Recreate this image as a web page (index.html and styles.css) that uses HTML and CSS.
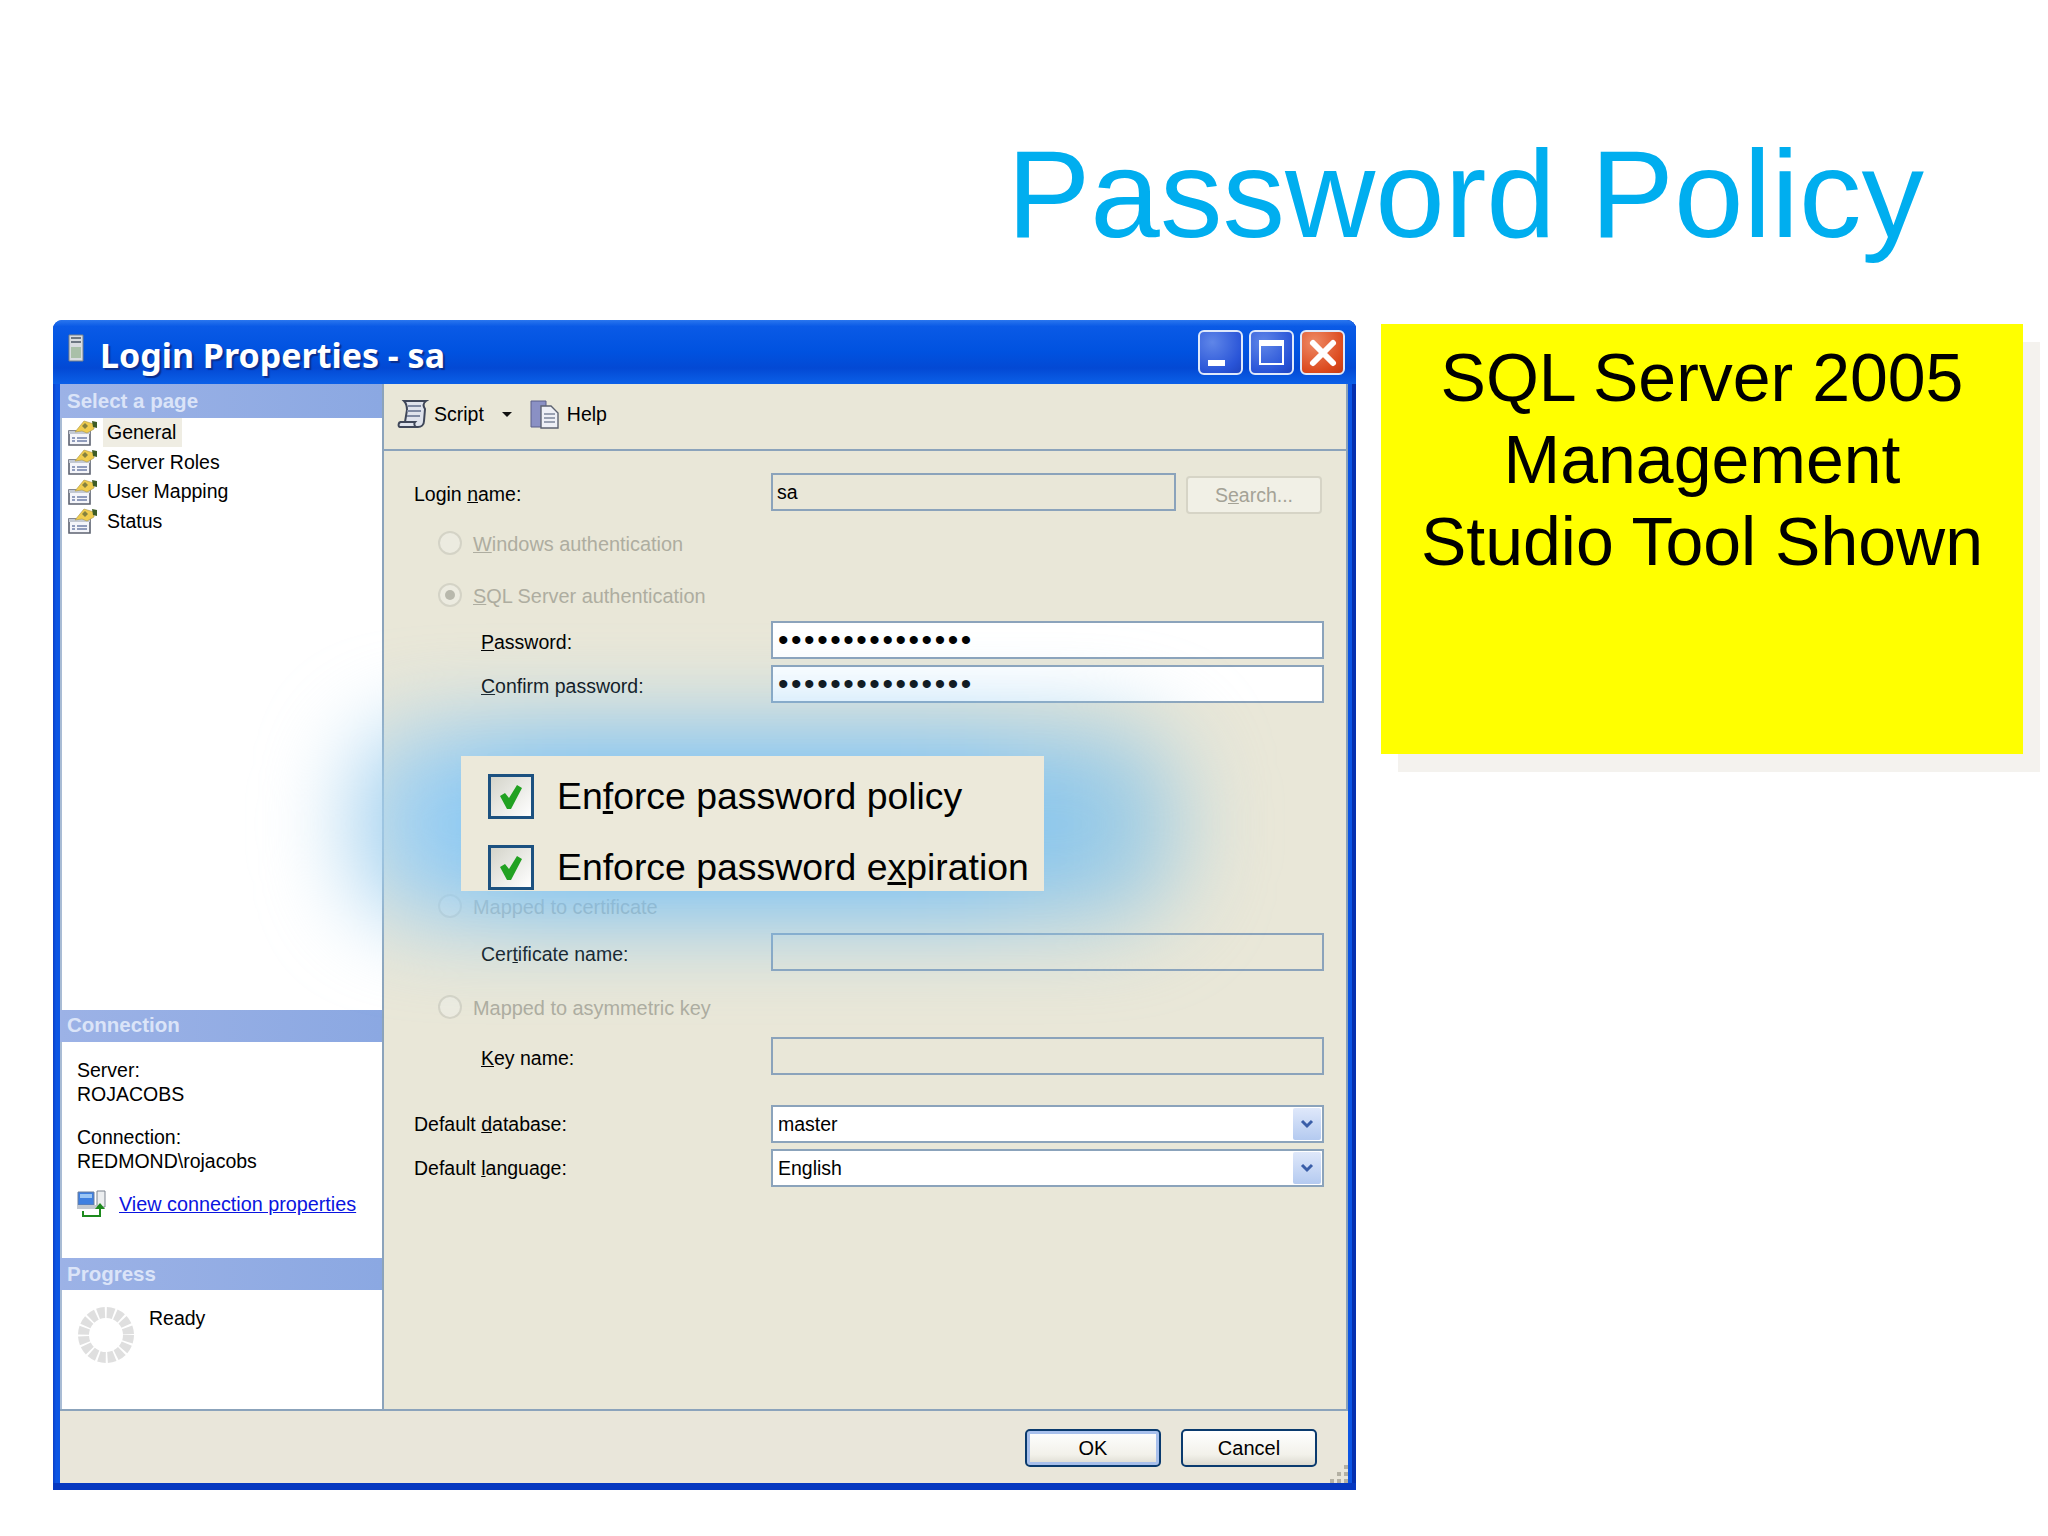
FILE: index.html
```html
<!DOCTYPE html>
<html lang="en">
<head>
<meta charset="utf-8">
<title>Password Policy</title>
<link rel="stylesheet" href="styles.css">
</head>
<body>
<svg class="defs" width="0" height="0" aria-hidden="true">
  <symbol id="page-icon" viewBox="0 0 30 26">
    <path d="M1 11h21v14H1z" fill="#f4f5fa" stroke="#5c6270" stroke-width="1.6"/>
    <path d="M1 11h21v3H1z" fill="#c3c9d4"/>
    <path d="M4 18h3M9 18h10M4 21h3M9 21h10" stroke="#6f7fa8" stroke-width="1.5"/>
    <path d="M7 12 16 1l10 3 0 5-7 4-5-2z" fill="#f0cc4e" stroke="#a8954a" stroke-width=".6"/>
    <path d="M14 6l3-3 3 3-3 3z" fill="#85823f"/>
    <path d="M24 1l5 1v6l-4-1z" fill="#3f5d26"/>
  </symbol>
</svg>
<main class="slide">
  <h1 class="slide-title">Password Policy</h1>
  <div class="stage">
    <section class="dialog">
      <header class="titlebar">
        <svg class="app-icon" viewBox="0 0 16 28" aria-hidden="true">
          <path d="M1 1h14v26H1z" fill="#d8dce0" stroke="#77808a"/>
          <path d="M3 4h10M3 8h10" stroke="#6d7782" stroke-width="2"/>
          <path d="M3 13h10v11H3z" fill="#a9c0a8"/>
        </svg>
        <span class="titlebar-text">Login Properties - sa</span>
        <div class="wincontrols">
          <span class="winbtn"><span class="glyph-min"></span></span>
          <span class="winbtn"><span class="glyph-max"></span></span>
          <span class="winbtn winbtn-close">
            <svg class="glyph-close" viewBox="0 0 30 30" aria-hidden="true"><path d="M5 5l20 20M25 5 5 25" stroke="#fff" stroke-width="6" stroke-linecap="round"/></svg>
          </span>
        </div>
      </header>
      <div class="client">
        <div class="body">
          <aside class="sidebar">
            <h2 class="side-head">Select a page</h2>
            <ul class="pages">
              <li class="page-item"><svg class="page-icon"><use href="#page-icon"/></svg><span class="page-label page-current">General</span></li>
              <li class="page-item"><svg class="page-icon"><use href="#page-icon"/></svg><span class="page-label">Server Roles</span></li>
              <li class="page-item"><svg class="page-icon"><use href="#page-icon"/></svg><span class="page-label">User Mapping</span></li>
              <li class="page-item"><svg class="page-icon"><use href="#page-icon"/></svg><span class="page-label">Status</span></li>
            </ul>
            <h2 class="side-head side-head-conn">Connection</h2>
            <div class="conn">
              <p class="conn-line">Server:<br>ROJACOBS</p>
              <p class="conn-line conn-line-2">Connection:<br>REDMOND\rojacobs</p>
              <div class="conn-link">
                <svg class="conn-icon" viewBox="0 0 30 28" aria-hidden="true">
                  <path d="M1 2h16v13H1z" fill="#3f7fe0" stroke="#6d7f9c"/>
                  <path d="M3 4h12v4H3z" fill="#9cc6f5"/>
                  <path d="M0 15h19v4H0z" fill="#c3c8d0"/>
                  <path d="M20 1h8v16h-8z" fill="#eceef0" stroke="#7c8490"/>
                  <path d="M6 21v5h17v-8" fill="none" stroke="#1d8a1d" stroke-width="2"/>
                  <path d="M18 19l5-6 5 6z" fill="#1d8a1d"/>
                </svg>
                <a class="link" href="#">View connection properties</a>
              </div>
            </div>
            <h2 class="side-head side-head-prog">Progress</h2>
            <div class="progress">
              <svg class="spinner" viewBox="0 0 56 56" aria-hidden="true">
                <circle cx="28" cy="28" r="22.5" fill="none" stroke="#dfdfdf" stroke-width="11" stroke-dasharray="7 1.84"/>
              </svg>
              <span class="ready">Ready</span>
            </div>
          </aside>
          <div class="panel">
            <div class="toolbar">
              <svg class="tool-icon" viewBox="0 0 32 30" aria-hidden="true">
                <path d="M7 2h22c-3 2-3 5-1 8l-1 12c0 4-3 6-6 6H3c-2 0-2-5 1-5h4l2-12C10 7 9 4 7 2z" fill="#dfe3ec" stroke="#3f4759" stroke-width="2"/>
                <path d="M11 7h13M10 12h14M10 17h13" stroke="#7f8aa3" stroke-width="1.8"/>
                <path d="M3 23h15c-1 1-1 4 1 5" fill="none" stroke="#3f4759" stroke-width="2"/>
              </svg>
              <span class="tool-label">Script</span>
              <span class="caret"></span>
              <svg class="tool-icon tool-icon-help" viewBox="0 0 30 30" aria-hidden="true">
                <path d="M1 2h15v26H1z" fill="#8a90c4" stroke="#5a5f88"/>
                <path d="M11 7h10l7 7v15H11z" fill="#eef0f6" stroke="#5c6270" stroke-width="1.4"/>
                <path d="M14 15h11M14 19h11M14 23h11" stroke="#7e869c" stroke-width="1.6"/>
              </svg>
              <span class="tool-label">Help</span>
            </div>
            <form class="form">
              <div class="row row-login">
                <label class="label label-low">Login <u>n</u>ame:</label>
                <div class="login-field">
                  <span class="field field-readonly">sa</span>
                  <span class="search-btn">S<u>e</u>arch...</span>
                </div>
              </div>
              <div class="radio-row radio-windows"><span class="radio"></span><span class="muted"><u>W</u>indows authentication</span></div>
              <div class="radio-row radio-sql"><span class="radio radio-on"></span><span class="muted"><u>S</u>QL Server authentication</span></div>
              <div class="row row-pass">
                <label class="label label-indent label-low"><u>P</u>assword:</label>
                <span class="field field-white dots">•••••••••••••••</span>
              </div>
              <div class="row row-confirm">
                <label class="label label-indent label-low"><u>C</u>onfirm password:</label>
                <span class="field field-white dots">•••••••••••••••</span>
              </div>
              <div class="radio-row radio-cert"><span class="radio"></span><span class="muted">Mapped to certificate</span></div>
              <div class="row row-cert">
                <label class="label label-indent label-low">Cer<u>t</u>ificate name:</label>
                <span class="field"></span>
              </div>
              <div class="radio-row radio-asym"><span class="radio"></span><span class="muted">Mapped to asymmetric key</span></div>
              <div class="row row-key">
                <label class="label label-indent label-low"><u>K</u>ey name:</label>
                <span class="field"></span>
              </div>
              <div class="row row-db">
                <label class="label">Default <u>d</u>atabase:</label>
                <span class="field field-white select">master<span class="select-btn"><svg class="chev" viewBox="0 0 14 10" aria-hidden="true"><path d="M2 2l5 5 5-5" fill="none" stroke="#3a5ea8" stroke-width="3"/></svg></span></span>
              </div>
              <div class="row row-lang">
                <label class="label">Default <u>l</u>anguage:</label>
                <span class="field field-white select">English<span class="select-btn"><svg class="chev" viewBox="0 0 14 10" aria-hidden="true"><path d="M2 2l5 5 5-5" fill="none" stroke="#3a5ea8" stroke-width="3"/></svg></span></span>
              </div>
            </form>
          </div>
        </div>
        <footer class="footer">
          <span class="btn btn-default">OK</span>
          <span class="btn">Cancel</span>
          <svg class="grip" viewBox="0 0 20 20" aria-hidden="true">
            <path d="M16 2h4v4h-4zM9 9h4v4H9zM16 9h4v4h-4zM2 16h4v4H2zM9 16h4v4H9zM16 16h4v4h-4z" fill="#b4b1a4"/>
          </svg>
        </footer>
        <div class="glow"></div>
        <div class="callout">
          <div class="callout-row"><span class="check"><svg class="tick" viewBox="0 0 24 26" aria-hidden="true"><path d="M1 12l5-3 4 5L18 1l5 3-11 21H8z" fill="#21a121"/></svg></span><span>En<u>f</u>orce password policy</span></div>
          <div class="callout-row"><span class="check"><svg class="tick" viewBox="0 0 24 26" aria-hidden="true"><path d="M1 12l5-3 4 5L18 1l5 3-11 21H8z" fill="#21a121"/></svg></span><span>Enforce password e<u>x</u>piration</span></div>
        </div>
      </div>
    </section>
    <aside class="note">SQL Server 2005 Management Studio Tool Shown</aside>
  </div>
</main>
</body>
</html>
```

FILE: styles.css
```css
* { box-sizing: border-box; }
html, body { margin: 0; padding: 0; background: #fff; }
.defs { position: absolute; }
.slide { width: 2048px; height: 1536px; font-family: "Liberation Sans", Arial, sans-serif; overflow: hidden; }
.slide-title { margin: 0; height: 320px; padding: 131px 124px 0 0; text-align: right; font-size: 125px; line-height: 1; font-weight: 400; color: #00aeef; }
.stage { display: flex; align-items: flex-start; padding-left: 53px; }

/* window frame */
.dialog { width: 1303px; height: 1170px; flex: none; display: flex; flex-direction: column; border-radius: 9px 9px 0 0; background: linear-gradient(90deg, #0a3fc8 0, #0c55e4 3px, #0c55e4 100%); padding: 0 8px 7px 7px; box-shadow: inset 0 -7px 0 #0638c0, inset -4px 0 0 #0530b0; }
.titlebar { height: 64px; flex: none; margin: 0 -8px 0 -7px; padding: 0 11px 0 15px; display: flex; align-items: center; border-radius: 9px 9px 0 0; background: linear-gradient(180deg, #2a76ee 0, #0a5ae6 10%, #0052e0 50%, #0349d4 75%, #0b60e8 100%); }
.app-icon { width: 16px; height: 28px; margin-right: 16px; margin-top: -8px; }
.titlebar-text { font-family: "Noto Sans", sans-serif; font-weight: 700; font-size: 34px; line-height: 1; margin-top: 5px; color: #fff; text-shadow: 2px 2px 1px #0a2f90; }
.wincontrols { margin-left: auto; display: flex; gap: 6px; margin-top: 1px; }
.winbtn { width: 45px; height: 45px; border: 2px solid #dfe9fb; border-radius: 6px; background: radial-gradient(circle at 30% 25%, #5f86e8, #2a55d8 70%, #1e44c0); position: relative; display: block; }
.winbtn-close { background: radial-gradient(circle at 30% 25%, #ee8a66, #dc4a1e 70%, #c23a14); display: flex; align-items: center; justify-content: center; }
.glyph-min { position: absolute; left: 8px; bottom: 7px; width: 17px; height: 6px; background: #fff; }
.glyph-max { position: absolute; left: 8px; top: 8px; width: 25px; height: 25px; border: 2px solid #fff; border-top-width: 6px; }
.glyph-close { width: 30px; height: 30px; }

/* client */
.client { position: relative; flex: 1; min-height: 0; display: flex; flex-direction: column; background: #e9e6da; color: #000; font-size: 19.5px; }
.body { flex: 1; min-height: 0; display: flex; border-bottom: 2px solid #8ba3bb; }
.sidebar { width: 324px; flex: none; display: flex; flex-direction: column; padding-left: 2px; background: #fff; border-right: 2px solid #8ba3bb; box-shadow: inset 2px 0 0 #a9bcd4; }
.side-head { margin: 0 0 0 -2px; height: 34px; padding-left: 7px; flex: none; font-size: 20.5px; line-height: 34px; font-weight: 700; color: #dbe4f8; background: linear-gradient(90deg, #9cb2e6, #8ba8e2); }
.pages { list-style: none; margin: 0; padding: 0; height: 592px; flex: none; }
.page-item { height: 29.5px; display: flex; align-items: center; padding-left: 6px; }
.page-icon { width: 30px; height: 26px; flex: none; margin-right: 5px; }
.page-label { height: 29px; line-height: 29px; padding: 0 6px 0 4px; }
.page-current { background: #efede3; }
.side-head-conn { height: 32px; line-height: 30px; }
.conn { height: 216px; flex: none; padding: 16px 0 0 15px; line-height: 24px; }
.conn-line { margin: 0; }
.conn-line-2 { margin-top: 19px; }
.conn-link { display: flex; align-items: center; margin-top: 16px; height: 30px; }
.conn-icon { width: 30px; height: 28px; flex: none; margin-right: 12px; }
.link { color: #0a14e0; white-space: nowrap; font-size: 19.8px; }
.side-head-prog { height: 32px; line-height: 32px; }
.progress { flex: 1; display: flex; align-items: flex-start; padding: 17px 0 0 16px; }
.spinner { width: 56px; height: 56px; flex: none; }
.ready { margin: -1px 0 0 15px; line-height: 24px; }

.panel { flex: 1; min-width: 0; display: flex; flex-direction: column; border-right: 2px solid #8ba3bb; background: #e9e7d8; }
.toolbar { height: 67px; flex: none; display: flex; align-items: center; padding: 0 0 5px 13px; border-bottom: 2px solid #8ba3bb; }
.tool-icon { width: 32px; height: 30px; flex: none; margin-right: 5px; }
.tool-icon-help { margin-right: 6px; }
.tool-label { line-height: 24px; }
.caret { width: 0; height: 0; margin: 0 17px 0 18px; border: 5px solid transparent; border-top: 5px solid #111; border-bottom: 0; }

/* form */
.form { padding: 22px 24px 0 30px; display: flex; flex-direction: column; }
.row { height: 38px; flex: none; display: grid; grid-template-columns: 357px 553px; align-items: center; }
.label { display: block; white-space: nowrap; line-height: 24px; }
.label-indent { padding-left: 67px; }
.label-low { padding-top: 3px; }
.field { display: block; height: 100%; border: 2px solid #8ba3bb; padding-left: 4px; line-height: 34px; background: #e9e7d8; position: relative; }
.field-white { background: #fff; }
.login-field { height: 38px; display: flex; gap: 10px; }
.field-readonly { width: 405px; flex: none; }
.search-btn { width: 136px; height: 38px; margin-top: 3px; border: 2px solid #d6d4c6; border-radius: 4px; background: #f1f0e6; color: #a4a296; text-align: center; line-height: 35px; }
.dots { font-size: 30px; letter-spacing: 2.55px; line-height: 34px; padding-left: 5px; }
.select { padding-left: 5px; }
.select-btn { position: absolute; right: 1px; top: 1px; bottom: 1px; width: 28px; background: linear-gradient(180deg, #dfe8fa, #b4caf0); border-radius: 2px; display: flex; align-items: center; justify-content: center; }
.chev { width: 14px; height: 10px; }

.radio-row { height: 28px; flex: none; display: flex; align-items: center; padding-left: 24px; }
.radio { width: 24px; height: 24px; flex: none; margin-right: 11px; border: 2px solid #d4d3c6; border-radius: 50%; background: #ecebe0; position: relative; }
.radio-on::after { content: ""; position: absolute; left: 5px; top: 5px; width: 10px; height: 10px; border-radius: 50%; background: #b8b8ac; }
.muted { color: #aeada0; line-height: 24px; white-space: nowrap; font-size: 19.9px; padding-top: 2px; }

.radio-windows { margin-top: 18px; }
.radio-sql { margin-top: 24px; }
.row-pass { margin-top: 12px; }
.row-confirm { margin-top: 6px; }
.radio-cert { margin-top: 189px; }
.row-cert { margin-top: 13px; }
.radio-asym { margin-top: 22px; }
.row-key { margin-top: 16px; }
.row-db { margin-top: 30px; }
.row-lang { margin-top: 6px; }

/* footer */
.footer { height: 72px; flex: none; position: relative; display: flex; gap: 20px; justify-content: flex-end; align-items: flex-start; padding: 18px 31px 0 0; }
.btn { width: 136px; height: 38px; border: 2px solid #0a3a6e; border-radius: 5px; background: linear-gradient(180deg, #fff, #f2f1ea 70%, #dcdad0); text-align: center; line-height: 34px; font-size: 20px; }
.btn-default { box-shadow: inset 0 0 0 3px #a8c0ec; }
.grip { position: absolute; right: 0; bottom: 0; width: 20px; height: 20px; }

/* overlays */
.glow { position: absolute; left: 290px; top: 345px; width: 830px; height: 190px; border-radius: 70px; background: linear-gradient(90deg, #b4d8ee, #7cc2f4 22%, #7cc2f4 72%, #a8cfe0); filter: blur(44px); pointer-events: none; }
.callout { position: absolute; left: 401px; top: 372px; width: 583px; height: 135px; padding: 18px 0 0 27px; background: #ece9da; display: flex; flex-direction: column; gap: 26px; overflow: hidden; }
.callout-row { display: flex; align-items: center; height: 45px; font-size: 37.4px; white-space: nowrap; color: #000; }
.check { width: 46px; height: 45px; flex: none; margin-right: 23px; border: 3px solid #1c5180; background: linear-gradient(135deg, #d4d4ca, #fff); display: flex; align-items: center; justify-content: center; }
.tick { width: 24px; height: 26px; }

/* yellow note */
.note { width: 642px; height: 430px; flex: none; margin: 4px 0 0 25px; padding: 12px 20px 0; background: #ff0; box-shadow: 17px 18px 0 #f4f2ee; text-align: center; font-size: 68px; line-height: 82px; color: #000; }
```
